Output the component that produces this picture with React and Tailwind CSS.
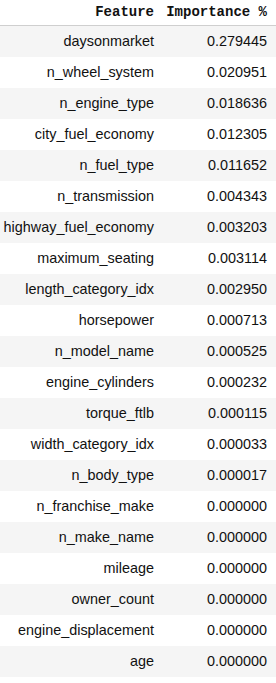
const rows = [
  ["daysonmarket", "0.279445"],
  ["n_wheel_system", "0.020951"],
  ["n_engine_type", "0.018636"],
  ["city_fuel_economy", "0.012305"],
  ["n_fuel_type", "0.011652"],
  ["n_transmission", "0.004343"],
  ["highway_fuel_economy", "0.003203"],
  ["maximum_seating", "0.003114"],
  ["length_category_idx", "0.002950"],
  ["horsepower", "0.000713"],
  ["n_model_name", "0.000525"],
  ["engine_cylinders", "0.000232"],
  ["torque_ftlb", "0.000115"],
  ["width_category_idx", "0.000033"],
  ["n_body_type", "0.000017"],
  ["n_franchise_make", "0.000000"],
  ["n_make_name", "0.000000"],
  ["mileage", "0.000000"],
  ["owner_count", "0.000000"],
  ["engine_displacement", "0.000000"],
  ["age", "0.000000"],
];

export default function App() {
  return (
    <div className="w-[276px] h-[683px] bg-white overflow-hidden">
      {/* header */}
      <div className="flex h-[26px] items-center border-b border-[#cfcfcf] font-['Liberation_Mono',monospace] font-bold text-[14px] text-[#111]">
        <div className="w-[162px] pr-[8px] text-right">Feature</div>
        <div className="flex-1 pr-[9px] text-right">Importance %</div>
      </div>

      {/* body */}
      <div className="font-['Liberation_Sans',Arial,sans-serif] text-[14.4px] text-[#111]">
        {rows.map(([name, val], i) => (
          <div
            key={name}
            className={`flex h-[31px] items-center ${i % 2 === 0 ? "bg-[#f5f5f5]" : "bg-white"}`}
          >
            <div className="w-[162px] pr-[8px] text-right whitespace-nowrap">{name}</div>
            <div className="flex-1 pr-[9px] text-right">{val}</div>
          </div>
        ))}
      </div>
    </div>
  );
}
